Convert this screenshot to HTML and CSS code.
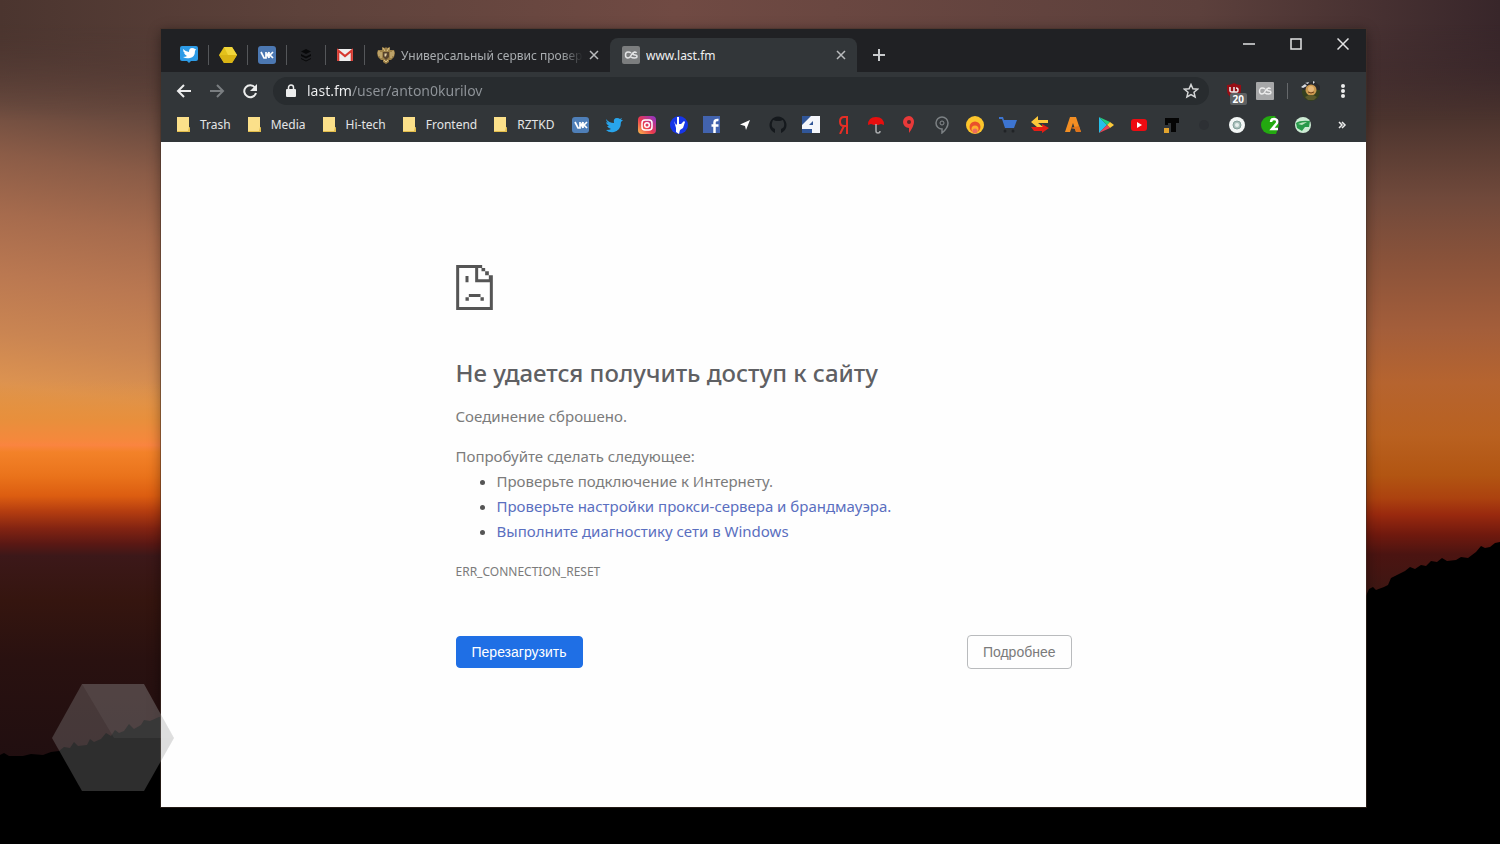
FILE: index.html
```html
<!DOCTYPE html>
<html lang="ru">
<head>
<meta charset="utf-8">
<title>www.last.fm</title>
<link rel="stylesheet" href="styles.css">
</head>
<body>
<div class="desktop">
  <svg class="wallpaper" viewBox="0 0 1500 844" preserveAspectRatio="none" aria-hidden="true">
    <defs>
      <linearGradient id="skyLeft" x1="0" y1="0" x2="0" y2="844" gradientUnits="userSpaceOnUse" gradientTransform="rotate(8)">
        <stop offset="0" stop-color="#48332e"/><stop offset=".06" stop-color="#573d36"/>
        <stop offset=".12" stop-color="#6b4b3f"/><stop offset=".18" stop-color="#8b5c47"/><stop offset=".25" stop-color="#a66b4d"/>
        <stop offset=".32" stop-color="#ba7851"/><stop offset=".39" stop-color="#ca8552"/><stop offset=".45" stop-color="#dd9350"/>
        <stop offset=".50" stop-color="#e5933f"/><stop offset="1" stop-color="#e5933f"/>
      </linearGradient>
      <linearGradient id="glow" x1="0" y1="380" x2="0" y2="780" gradientUnits="userSpaceOnUse">
        <stop offset="0" stop-color="#e2933f" stop-opacity="0"/><stop offset=".1" stop-color="#e88f3c"/><stop offset=".15" stop-color="#f5883c"/>
        <stop offset=".163" stop-color="#fa8440"/><stop offset=".18" stop-color="#f38229"/><stop offset=".24" stop-color="#ea731b"/>
        <stop offset=".29" stop-color="#dc5d11"/><stop offset=".33" stop-color="#b33c10"/><stop offset=".37" stop-color="#842412"/>
        <stop offset=".41" stop-color="#5a1814"/><stop offset=".44" stop-color="#3c1819"/><stop offset=".55" stop-color="#35150f"/>
        <stop offset=".7" stop-color="#291110"/><stop offset="1" stop-color="#1f0e10"/>
      </linearGradient>
      <linearGradient id="skyRight" x1="0" y1="0" x2="0" y2="660" gradientUnits="userSpaceOnUse">
        <stop offset="0" stop-color="#38262a"/><stop offset=".1" stop-color="#3e2a2b"/><stop offset=".18" stop-color="#4c342e"/>
        <stop offset=".3" stop-color="#70493b"/><stop offset=".4" stop-color="#8b533a"/><stop offset=".5" stop-color="#a45e3a"/>
        <stop offset=".58" stop-color="#b6642f"/><stop offset=".66" stop-color="#b96120"/><stop offset=".72" stop-color="#b25512"/>
        <stop offset=".755" stop-color="#ac420f"/><stop offset=".78" stop-color="#99290e"/><stop offset=".81" stop-color="#70190e"/>
        <stop offset=".84" stop-color="#4b1411"/><stop offset=".9" stop-color="#3c1713"/><stop offset="1" stop-color="#20100f"/>
      </linearGradient>
      <linearGradient id="fade"><stop offset=".1" stop-color="#000"/><stop offset=".6" stop-color="#555"/><stop offset=".92" stop-color="#fff"/></linearGradient>
      <mask id="fadeMask"><rect width="1500" height="844" fill="url(#fade)"/></mask>
      <linearGradient id="topWarm"><stop offset="0" stop-color="#4b352f"/><stop offset=".2" stop-color="#5d423b"/><stop offset=".45" stop-color="#704a43"/><stop offset=".8" stop-color="#5c403c"/><stop offset="1" stop-color="#38262a"/></linearGradient>
      <linearGradient id="topFade" x2="0" y2="1"><stop offset=".2" stop-color="#fff"/><stop offset="1" stop-color="#000"/></linearGradient>
      <mask id="topMask"><rect width="1500" height="120" fill="url(#topFade)"/></mask>
    </defs>
    <rect width="1500" height="844" fill="url(#skyLeft)"/>
    <rect y="380" width="1500" height="464" fill="url(#glow)"/>
    <rect width="1500" height="844" fill="url(#skyRight)" mask="url(#fadeMask)"/>
    <rect width="1500" height="120" fill="url(#topWarm)" mask="url(#topMask)"/>
    <path d="M0 755l4-2 5 3 14 0 8-2 12 1 8-3 8-1 5-4 6 1 4-6 4 4 9-1 3-6 4 3 7-3 5-6 5 3 4-6 4 3 5-2 5-7 5 5 7-4 3-5 6 1 9-4 L1366 596 1369 589 1373 587 1376 590 1384 587 1388 585 1391 578 1397 575 1405 571 1410 567 1415 569 1421 565 1426 566 1431 561 1437 562 1442 558 1447 561 1456 560 1461 557 1468 558 1476 552 1481 546 1485 548 1490 547 1495 543 1500 542V844H0z" fill="#000"/>
  </svg>

  <main class="window">
    <header class="tabstrip">
      <nav class="tabs" aria-label="Вкладки">
        <a class="pin" href="#" aria-label="Twitter"><svg viewBox="0 0 18 18"><path d="M2 0h14a2 2 0 0 1 2 2v11a2 2 0 0 1-2 2h-5l-2 2-2-2H2a2 2 0 0 1-2-2V2a2 2 0 0 1 2-2z" fill="#2d9be6"/><path d="M3 3q3 3 6 3 0-4 3-4 2 0 3 1l1 0-1 2q0 6-5 7-4 1-7-1 3 0 4-1-2-1-3-3h1Q3 6 3 3z" fill="#fff"/></svg></a>
        <a class="pin" href="#" aria-label="Заметки"><svg viewBox="0 0 18 18"><path d="M5 1h8l5 8-5 8H5L0 9z" fill="#e3c21b"/><path d="M5 1h8l5 8H9z" fill="#f1d63b"/><path d="M0 9h18l-5 8H5z" fill="#d9b414"/></svg></a>
        <a class="pin" href="#" aria-label="VK"><svg viewBox="0 0 18 18"><rect width="18" height="18" rx="3" fill="#4c78b2"/><path d="M3 6l3 6h2V6M8 9q2 0 3-3M8 9q2 0 3 3M11 6v6M15 6l-3 3 3 3" fill="none" stroke="#fff" stroke-width="1.700"/></svg></a>
        <a class="pin" href="#" aria-label="Buffer"><svg viewBox="0 0 18 18"><path d="M9 3l5 2.500-5 2.500-5-2.500zM4 8l5 2.500L14 8v2l-5 2.500L4 10zM4 12l5 2.500 5-2.500v1l-5 2.500L4 13z" fill="#08090a"/></svg></a>
        <a class="pin" href="#" aria-label="Gmail"><svg viewBox="0 0 18 18"><rect x="1" y="3" width="16" height="12" rx="1" fill="#eee"/><path d="M2.200 15V4.500L9 10l6.800-5.500V15" fill="none" stroke="#d6382f" stroke-width="2.200"/></svg></a>
        <a class="tab" href="#"><svg viewBox="0 0 18 18"><path d="M5 1l3 1 1-1 1 1 3-1 0 3 4 0 1 3-1 4-3 3-2 0 0 2-3 2-3-2 0-2-2 0-3-3-1-4 1-3 4 0z" fill="#9c8048"/><path d="M2 5v5M4 6v6M16 5v5M14 6v6M6 2l2 3M12 2l-2 3M7 14l2 2 2-2" stroke="#dcc489" fill="none"/><path d="M6 6h6v5l-3 3-3-3z" fill="#57422c"/><path d="M7.500 7.500h2.500l-1 3H7.500z" fill="#e0cda4"/></svg><span class="tab-title tab-title-faded">Универсальный сервис провери</span><svg class="close" viewBox="0 0 10 10"><path d="M1 1l8 8M9 1L1 9"/></svg></a>
        <a class="tab tab-active" href="#" aria-current="page"><svg viewBox="0 0 18 18"><rect width="18" height="18" rx="2" fill="#7b7d7e"/><path d="M9 7Q8 6 6 6a2.500 3 0 0 0 0 6q2 0 3-2.500T12.500 6Q14 6 14.500 7M9 11q1 1 3.500 1 2.500 0 2.500-1.500T13 9q-2 0-2-1.500" fill="none" stroke="#e3e4e5" stroke-width="1.500"/></svg><span class="tab-title">www.last.fm</span><svg class="close" viewBox="0 0 10 10"><path d="M1 1l8 8M9 1L1 9"/></svg></a>
      </nav>
      <button class="icon-button new-tab" aria-label="Новая вкладка"><svg viewBox="0 0 12 12"><path d="M6 0v12M0 6h12" stroke="#c9cbcd" stroke-width="2"/></svg></button>
      <div class="window-controls">
        <button class="icon-button" aria-label="Свернуть"><svg viewBox="0 0 12 12"><path d="M0 6h12"/></svg></button>
        <button class="icon-button" aria-label="Развернуть"><svg viewBox="0 0 12 12"><path d="M1 1h10v10H1z"/></svg></button>
        <button class="icon-button" aria-label="Закрыть"><svg viewBox="0 0 12 12"><path d="M.5.500l11 11M11.500.500l-11 11"/></svg></button>
      </div>
    </header>

    <div class="toolbar">
      <button class="icon-button" aria-label="Назад"><svg viewBox="0 0 16 16"><path d="M15 8H2M8 2L2 8l6 6" fill="none" stroke="#eceded" stroke-width="2"/></svg></button>
      <button class="icon-button" aria-label="Вперёд"><svg viewBox="0 0 16 16"><path d="M1 8h13M8 2l6 6-6 6" fill="none" stroke="#7a7e81" stroke-width="2"/></svg></button>
      <button class="icon-button" aria-label="Обновить"><svg viewBox="0 0 16 16"><path d="M13 4.500A6 6 0 1 0 14 10" fill="none" stroke="#eceded" stroke-width="2"/><path d="M15 1v7H8z" fill="#eceded"/></svg></button>
      <div class="omnibox">
        <svg class="lock" viewBox="0 0 10 13"><rect y="5" width="10" height="8" rx="1" fill="#eceded"/><path d="M2.500 6V3.500a2.500 2.500 0 0 1 5 0V6" fill="none" stroke="#eceded" stroke-width="1.500"/></svg>
        <input class="address" type="text" value="last.fm/user/anton0kurilov" aria-label="Адрес">
        <button class="icon-button" aria-label="В закладки"><svg viewBox="0 0 16 16"><path d="M8 1.500l1.900 4.300 4.700.4-3.600 3.100 1.100 4.600L8 11.500l-4.100 2.400L5 9.300 1.400 6.200l4.700-.4z" fill="none" stroke="#d5d7d8" stroke-width="1.500"/></svg></button>
      </div>
      <div class="extensions">
        <button class="icon-button extension" aria-label="uBlock"><svg viewBox="0 0 16 16"><path d="M8 0q3 2 7 2v5q0 6-7 9-7-3-7-9V2q4 0 7-2z" fill="#970d14"/><path d="M4 4v4q0 1 2 1t2-1V4M8 9h3q1 0 1-2t-2-2" fill="none" stroke="#eee" stroke-width="1.500"/></svg><span class="badge">20</span></button>
        <button class="icon-button lastfm" aria-label="Last.fm"><svg viewBox="0 0 18 18"><rect width="18" height="18" rx="1" fill="#a6a7a8"/><path d="M9 7Q8 6 6 6a2.500 3 0 0 0 0 6q2 0 3-2.500T12.500 6Q14 6 14.500 7M9 11q1 1 3.500 1 2.500 0 2.500-1.500T13 9q-2 0-2-1.500" fill="none" stroke="#ececec" stroke-width="1.400"/></svg></button>
        <span class="divider"></span>
        <button class="icon-button avatar" aria-label="Профиль"><svg viewBox="0 0 22 22"><circle cx="11" cy="12" r="9" fill="#34401f"/><path d="M2 9l3-6 5 0 4-2 6 5 0 4H4z" fill="#29292d"/><path d="M1 7l4-3 2 2-4 2zM5 3l4-1-1 2zM13 1l2 1-2 2z" fill="#d9dce2"/><circle cx="11" cy="10" r="5.500" fill="#c9984f"/><circle cx="11" cy="9" r="3" fill="#e5b678"/><path d="M8 12q3 2 6 0" fill="none" stroke="#6f421c"/><path d="M5 17q6-4 12 0l-3 3H8z" fill="#5b5a2b"/></svg></button>
        <button class="icon-button" aria-label="Меню"><svg viewBox="0 0 16 16"><g fill="#eceded"><circle cx="8" cy="3" r="2"/><circle cx="8" cy="8" r="2"/><circle cx="8" cy="13" r="2"/></g></svg></button>
      </div>
    </div>

    <nav class="bookmarks" aria-label="Закладки">
      <div class="folders">
        <a href="#"><svg class="folder" viewBox="0 0 13 15"><path d="M0 0h12v10l1 1v4H0z" fill="#fbe08a"/><path d="M0 15h13v-4l-1-1-1 4H0z" fill="#e3bd4b"/></svg>Trash</a>
        <a href="#"><svg class="folder" viewBox="0 0 13 15"><path d="M0 0h12v10l1 1v4H0z" fill="#fbe08a"/><path d="M0 15h13v-4l-1-1-1 4H0z" fill="#e3bd4b"/></svg>Media</a>
        <a href="#"><svg class="folder" viewBox="0 0 13 15"><path d="M0 0h12v10l1 1v4H0z" fill="#fbe08a"/><path d="M0 15h13v-4l-1-1-1 4H0z" fill="#e3bd4b"/></svg>Hi-tech</a>
        <a href="#"><svg class="folder" viewBox="0 0 13 15"><path d="M0 0h12v10l1 1v4H0z" fill="#fbe08a"/><path d="M0 15h13v-4l-1-1-1 4H0z" fill="#e3bd4b"/></svg>Frontend</a>
        <a href="#"><svg class="folder" viewBox="0 0 13 15"><path d="M0 0h12v10l1 1v4H0z" fill="#fbe08a"/><path d="M0 15h13v-4l-1-1-1 4H0z" fill="#e3bd4b"/></svg>RZTKD</a>
      </div>
      <div class="sites">
        <a href="#" aria-label="VK"><svg viewBox="0 0 18 18"><rect y="1" width="17" height="16" rx="3" fill="#4f7fb8"/><path d="M3 6l3 6h2V6M8 9q2 0 3-3M8 9q2 0 3 3M11 6v6M15 6l-3 3 3 3" fill="none" stroke="#fff" stroke-width="1.700"/></svg></a>
        <a href="#" aria-label="Twitter"><svg viewBox="0 0 18 18"><path d="M1 3q3 4 8 4-1-5 3-5 2 0 3 1l2-1-1 2 2 0-2 2q0 8-7 10-5 1-8-2 4 0 5-1-3-1-4-3h2Q1 8 1 6l2 1Q1 5 1 3z" fill="#28a4eb"/></svg></a>
        <a href="#" aria-label="Instagram"><svg viewBox="0 0 18 18"><defs><linearGradient id="insta" x1="0" y1="1" x2="1" y2="0"><stop stop-color="#fcc04b"/><stop offset=".45" stop-color="#e9384f"/><stop offset="1" stop-color="#8a35d0"/></linearGradient></defs><rect width="18" height="18" rx="4" fill="url(#insta)"/><rect x="4" y="4" width="10" height="10" rx="3" fill="none" stroke="#fff" stroke-width="1.500"/><circle cx="9" cy="9" r="2.300" fill="none" stroke="#fff" stroke-width="1.500"/></svg></a>
        <a href="#" aria-label="Rock"><svg viewBox="0 0 18 18"><circle cx="9" cy="9" r="9" fill="#1736e8"/><path d="M4 5l2 4 1-1V1h2l0 7 2 0 3-3 1 1-2 6-3 2-1 4-3-2 0-4z" fill="#fff"/></svg></a>
        <a href="#" aria-label="Facebook"><svg viewBox="0 0 18 18"><rect width="17" height="17" fill="#4263ae"/><path d="M11.500 17V6.500q0-3 4-2.500M8.500 9.500h7" fill="none" stroke="#fff" stroke-width="2.500"/></svg></a>
        <a href="#" aria-label="Навигатор"><svg viewBox="0 0 18 18"><path d="M14 4L10 14 9 10 4 8.500z" fill="#fff"/></svg></a>
        <a href="#" aria-label="GitHub"><svg viewBox="0 0 18 18"><path d="M6 17A8.500 8.500 0 1 1 12 17v-4q4-1 3-6l-1-3-3 1H7L4 4 3 7q-1 5 3 6z" fill="#15191d"/></svg></a>
        <a href="#" aria-label="4PDA"><svg viewBox="0 0 18 18"><path d="M0 0h18v17H0z" fill="#f4f6fb"/><path d="M0 0h9L0 9zM7 9l4-4v4zM0 13h10v4H0z" fill="#315698"/></svg></a>
        <a href="#" aria-label="Яндекс"><svg viewBox="0 0 18 18"><path d="M12 18V1H9Q5 1 5 5.500T9 10h3M9 10l-4 8" fill="none" stroke="#e52e25" stroke-width="2"/></svg></a>
        <a href="#" aria-label="Погода"><svg viewBox="0 0 18 18"><path d="M1 9Q1 1 9 1t8 8l-3-1-3 1H7L4 8z" fill="#e80e0e"/><path d="M9 8v7q0 2 2 2t2-2" fill="none" stroke="#aaacae" stroke-width="1.500"/></svg></a>
        <a href="#" aria-label="Карты"><svg viewBox="0 0 18 18"><path d="M9 0a5.500 5.500 0 0 1 5 6q0 4-5 11l0-5a5.500 5.500 0 0 1 0-12z" fill="#e93939"/><circle cx="9" cy="6" r="2" fill="#53292e"/></svg></a>
        <a href="#" aria-label="Места"><svg viewBox="0 0 18 18"><path d="M9 1a6 6 0 0 1 6 6q0 5-6 10v-4A6 6 0 0 1 9 1z" fill="none" stroke="#7c8184" stroke-width="1.500"/><circle cx="9" cy="7" r="2" fill="none" stroke="#898d90"/></svg></a>
        <a href="#" aria-label="Огонь"><svg viewBox="0 0 18 18"><circle cx="9" cy="9" r="9" fill="#fdc62c"/><circle cx="9" cy="11" r="5.500" fill="#e9512b"/><circle cx="9" cy="13" r="3.500" fill="#fdb02c"/><circle cx="9" cy="15" r="2.500" fill="#ee6c5c"/></svg></a>
        <a href="#" aria-label="Покупки"><svg viewBox="0 0 18 18"><path d="M0 1h4l1 3h13l-3 8H6L3 3H0z" fill="#3d75d1"/><circle cx="6" cy="15" r="1.500" fill="#202326"/><circle cx="14" cy="15" r="1.500" fill="#202326"/></svg></a>
        <a href="#" aria-label="Обмен"><svg viewBox="0 0 18 18"><path d="M18 12l-7 5v-2H3l-3-4h11V8z" fill="#e41e16"/><path d="M0 6l7-6v4h10v3H7l5 4H6z" fill="#fdc83a"/></svg></a>
        <a href="#" aria-label="A"><svg viewBox="0 0 18 18"><path d="M6 1h6l5 15h-5l-3-9-3 9H1z" fill="#f38e23"/><path d="M6 12l9-2 2 6h-5l-1-3z" fill="#df741b"/></svg></a>
        <a href="#" aria-label="Google Play"><svg viewBox="0 0 18 18"><path d="M2 1l8 8-8 8z" fill="#27bfe9"/><path d="M2 1l11 5-3 3z" fill="#21ce7c"/><path d="M13 6l4 3-4 3-3-3z" fill="#fccb3a"/><path d="M2 17l8-8 3 3z" fill="#eb4253"/></svg></a>
        <a href="#" aria-label="YouTube"><svg viewBox="0 0 18 18"><rect x="1" y="3" width="16" height="12" rx="3" fill="#ee0b12"/><path d="M7 6l5 3-5 3z" fill="#fff"/></svg></a>
        <a href="#" aria-label="T"><svg viewBox="0 0 18 18"><path d="M2 2h14v5h-3v9H8V7H5v2H2z" fill="#050505"/><path d="M1 12h5v5H1z" fill="#e3a42e"/></svg></a>
        <a href="#" aria-label="Закладка"><svg viewBox="0 0 18 18"><circle cx="9" cy="9" r="5" fill="#2d3034"/></svg></a>
        <a href="#" aria-label="Музыка"><svg viewBox="0 0 18 18"><circle cx="9" cy="9" r="8" fill="#f3f7f6"/><circle cx="9" cy="9" r="4" fill="#a9c1bc" stroke="#84a09a"/><circle cx="9" cy="9" r="2" fill="#e7efed"/></svg></a>
        <a href="#" aria-label="2"><svg viewBox="0 0 18 18"><path d="M9 0a9 9 0 1 0 0 18h6L18 9 14 0z" fill="#23a910"/><path d="M10 6q0-3 3-3 4 0 3 4l-5 6h6" fill="none" stroke="#fff" stroke-width="2.500"/></svg></a>
        <a href="#" aria-label="Планета"><svg viewBox="0 0 18 18"><circle cx="9" cy="9" r="8" fill="#cdebd4"/><path d="M2 7q4-3 14-2l-1 6-4 0-3 4-5-3z" fill="#299a4b"/><path d="M4 8q4-2 9-2l-5 3z" fill="#bde4bf"/></svg></a>
      </div>
      <button class="icon-button more" aria-label="Другие закладки"><svg viewBox="0 0 10 10"><path d="M2 2l3 3-3 3M5 2l3 3-3 3" fill="none" stroke="#eceded" stroke-width="1.500"/></svg></button>
    </nav>

    <section class="page">
      <div class="error">
        <svg class="sad-page" viewBox="0 0 110 135" aria-hidden="true"><path d="M0 0h78v9h9v10H76V9h-10v34h44v92H0zm9 9v117h92V52H57V9zM87 19h11v12H87zM98 31h12v12H98zM28 33h9v19h-9zM38 87h35v9H38zM28 97h10v10H28zM73 97h10v10H73z" fill="#555" fill-rule="evenodd"/></svg>
        <h1>Не удается получить доступ к сайту</h1>
        <p>Соединение сброшено.</p>
        <div class="suggestions">
          <p>Попробуйте сделать следующее:</p>
          <ul>
            <li>Проверьте подключение к Интернету.</li>
            <li><a href="#">Проверьте настройки прокси-сервера и брандмауэра.</a></li>
            <li><a href="#">Выполните диагностику сети в Windows</a></li>
          </ul>
        </div>
        <p class="error-code">ERR_CONNECTION_RESET</p>
        <div class="actions">
          <button class="reload">Перезагрузить</button>
          <button class="details">Подробнее</button>
        </div>
      </div>
    </section>
  </main>

  <svg class="watermark" viewBox="0 0 122 107" aria-hidden="true"><path d="M30 0h62l30 54-30 53H30L0 54z" fill="#969696" fill-opacity=".31"/><path d="M30 0h62l30 54H62z" fill="#fff" fill-opacity=".05"/></svg>
</div>
</body>
</html>
```

FILE: styles.css
```css
* { box-sizing: border-box; }

body {
  margin: 0;
  font-family: "Noto Sans", "Open Sans", sans-serif;
}

a { color: inherit; text-decoration: none; }
svg { display: block; flex: none; }

.desktop {
  position: relative;
  display: flex;
  min-height: 100vh;
  padding: 29px 134px 37px 161px;
  background: #000;
}

.wallpaper {
  position: absolute;
  inset: 0;
  width: 100%;
  height: 100%;
}

.watermark {
  position: absolute;
  left: 52px;
  bottom: 53px;
  width: 122px;
  height: 107px;
}

.window {
  position: relative;
  display: flex;
  flex: 1;
  flex-direction: column;
  min-width: 0;
  background: #fefefe;
  box-shadow: 0 0 0 1px rgba(70, 50, 40, .5), 0 2px 12px rgba(0, 0, 0, .4);
}

.icon-button {
  display: grid;
  place-items: center;
  flex: none;
  padding: 0;
  border: 0;
  background: none;
}

/* Tab strip */
.tabstrip {
  display: flex;
  align-items: flex-end;
  height: 43px;
  padding-left: 9px;
  background: #202124;
}

.tabs {
  display: flex;
  align-items: flex-end;
  min-width: 0;
}

.pin {
  display: grid;
  place-items: center;
  width: 39px;
  height: 20px;
  margin-bottom: 7px;
  border-right: 1px solid #55575a;
}

.pin svg, .tab > svg:first-child { width: 18px; height: 18px; }

.tab {
  display: flex;
  align-items: center;
  gap: 6px;
  width: 245px;
  height: 34px;
  padding: 0 11px 0 12px;
  color: #a9adb0;
  font-size: 12px;
}

.tab-active {
  width: 247px;
  border-radius: 8px 8px 0 0;
  background: #323639;
  color: #eff0f1;
}

.tab-title {
  flex: 1;
  overflow: hidden;
  white-space: nowrap;
}

.tab-title-faded {
  mask-image: linear-gradient(to right, #000 88%, transparent);
}

.tab .close {
  width: 10px;
  height: 10px;
  stroke: #b9bbbd;
  stroke-width: 1.5;
}

.new-tab { width: 44px; height: 34px; }
.new-tab svg { width: 12px; height: 12px; }

.window-controls {
  display: flex;
  align-self: flex-start;
  margin-left: auto;
}

.window-controls button { width: 47px; height: 30px; }

.window-controls svg {
  width: 12px;
  height: 12px;
  fill: none;
  stroke: #e2e3e4;
  stroke-width: 1.5;
}

/* Toolbar */
.toolbar {
  display: flex;
  align-items: center;
  height: 37px;
  padding: 0 7px 0 6px;
  background: #323639;
}

.toolbar > button { width: 33px; height: 28px; }
.toolbar > button svg, .omnibox button svg { width: 16px; height: 16px; }

.omnibox {
  display: flex;
  align-items: center;
  flex: 1;
  height: 28px;
  margin-left: 7px;
  padding: 0 10px 0 13px;
  border-radius: 14px;
  background: #282c2f;
}

.lock { width: 10px; height: 13px; margin-right: 11px; }

.address {
  flex: 1;
  min-width: 0;
  padding: 0;
  border: 0;
  outline: 0;
  background: linear-gradient(to right, #f1f2f3 44px, #90959a 44px) text;
  color: #90959a;
  -webkit-text-fill-color: transparent;
  font: 14px "Noto Sans", "Open Sans", sans-serif;
}

.extensions {
  display: flex;
  align-items: center;
  margin-left: 10px;
}

.extensions button { width: 32px; height: 28px; }
.extensions button svg { width: 16px; height: 16px; }
.extensions .avatar svg { width: 22px; height: 22px; }
.extensions .lastfm svg { width: 18px; height: 18px; }
.extensions .extension { position: relative; width: 30px; }

.badge {
  position: absolute;
  right: 2px;
  bottom: 0;
  padding: 0 3px;
  border-radius: 2px;
  background: #5e6163;
  color: #fff;
  font: bold 10px/12px "Noto Sans", "Open Sans", sans-serif;
}

.divider {
  width: 1px;
  height: 16px;
  margin: 0 7px 0 6px;
  background: #66696c;
}

/* Bookmarks bar */
.bookmarks {
  display: flex;
  align-items: center;
  height: 33px;
  padding: 0 12px 2px 16px;
  background: #323639;
  color: #e4e5e6;
  font-size: 12px;
}

.folders { display: flex; gap: 17px; width: 395px; }
.folders a { display: flex; align-items: center; gap: 10px; white-space: nowrap; }
.folder { width: 13px; height: 15px; }

.sites {
  display: flex;
  flex: 1;
  justify-content: space-between;
  margin-right: 18px;
}

.sites svg { width: 18px; height: 18px; }
.more { width: 24px; height: 20px; }
.more svg { width: 10px; height: 10px; }

/* Error page */
.page { flex: 1; padding: 123px 24px 24px; }

.error {
  max-width: 616px;
  margin: 0 auto;
  color: #7b7b7b;
  font-size: 15px;
  line-height: 25px;
}

.sad-page { width: 37px; height: 45px; }

h1 {
  margin: 47px 0 15px;
  color: #5f6063;
  font-size: 24px;
  font-weight: 500;
  line-height: 32px;
}

p { margin: 0; }
.suggestions { margin-top: 15px; }

ul { margin: 0; padding-left: 41px; }
li::marker { color: #555; }
li a { color: #5a6fc0; }

.error-code { margin-top: 16px; font-size: 12px; line-height: 24px; }

.actions {
  display: flex;
  align-items: center;
  justify-content: space-between;
  margin-top: 51px;
}

.actions button {
  padding: 0 15px;
  border: 1px solid #1f6fe5;
  border-radius: 4px;
  font: 14px/32px "Liberation Sans", sans-serif;
}

.actions .reload { background: #1f6fe5; color: #fff; line-height: 30px; }
.actions .details { border-color: #b9bbbd; background: #fefefe; color: #7b7b7b; }
```
